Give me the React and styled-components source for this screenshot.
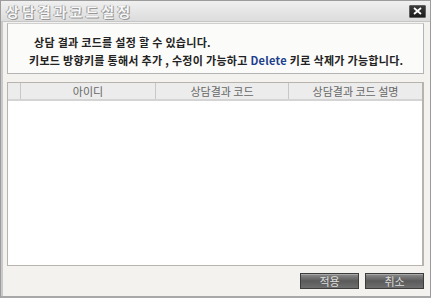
import styled, { createGlobalStyle } from "styled-components";

const GlobalStyle = createGlobalStyle`
  html, body {
    margin: 0;
    padding: 0;
    background: #ffffff;
  }
  #root {
    width: 431px;
    height: 300px;
  }
`;

const columns = ["아이디", "상담결과 코드", "상담결과 코드 설명"];

const App = () => {
  return (
    <>
      <GlobalStyle />
      <Window>
        <TitleBar>
          <Title>상담결과코드설정</Title>
          <CloseButton aria-label="close">
            <svg width="9" height="8" viewBox="0 0 9 8">
              <path d="M1 1 L8 7 M8 1 L1 7" stroke="#ffffff" strokeWidth="1.8" />
            </svg>
          </CloseButton>
        </TitleBar>
        <Body>
          <InfoBox>
            <InfoLine $indent={26}>상담 결과 코드를 설정 할 수 있습니다.</InfoLine>
            <InfoLine $indent={21}>
              키보드 방향키를 통해서 추가 , 수정이 가능하고 <Key>Delete</Key> 키로 삭제가 가능합니다.
            </InfoLine>
          </InfoBox>
          <Grid>
            <HeaderRow>
              <RowHead />
              {columns.map((c) => (
                <HeaderCell key={c}>{c}</HeaderCell>
              ))}
            </HeaderRow>
            <GridBody />
          </Grid>
          <Footer>
            <ActionButton>적용</ActionButton>
            <ActionButton>취소</ActionButton>
          </Footer>
        </Body>
      </Window>
    </>
  );
};

export default App;

const Window = styled.div`
  width: 431px;
  height: 298px;
  box-sizing: border-box;
  display: flex;
  flex-direction: column;
  background: #f3f2ee;
  border: 1px solid #9c9c9c;
  border-bottom: 2px solid #a8a8a8;
  font-family: "Noto Sans CJK KR", "Noto Sans", sans-serif;
`;

const TitleBar = styled.div`
  height: 20px;
  flex: none;
  display: flex;
  align-items: center;
  justify-content: space-between;
  padding: 0 4px 0 5px;
  background: linear-gradient(#f0f0f0, #dcdcdc);
  border-bottom: 1px solid #c6c6c6;
`;

const Title = styled.span`
  font-size: 14px;
  font-weight: 700;
  color: #f7f7f7;
  letter-spacing: 3px;
  line-height: 16px;
  text-shadow: 0 0 1px #8a8a8a, 1px 1px 0 #9a9a9a, -1px 0 0 #a8a8a8;
`;

const CloseButton = styled.div`
  width: 15px;
  height: 11px;
  display: flex;
  align-items: center;
  justify-content: center;
  background: linear-gradient(#3a3a3a, #1c1c1c);
  border: 1px solid #606060;
  border-radius: 1px;
`;

const Body = styled.div`
  flex: 1;
  display: flex;
  flex-direction: column;
  padding: 1px 6px 0 4px;
  border-left: 2px solid #c9c9c9;
`;

const InfoBox = styled.div`
  height: 51px;
  box-sizing: border-box;
  display: flex;
  flex-direction: column;
  gap: 6px;
  padding-top: 12px;
  background: #fbfbf9;
  border: 1px solid #b4b4b4;
  border-top-color: #cfcfcf;
`;

const InfoLine = styled.div`
  padding-left: ${(p) => p.$indent}px;
  font-size: 11px;
  font-weight: 700;
  color: #222222;
  line-height: 12px;
  letter-spacing: 0.3px;
  white-space: nowrap;
`;

const Key = styled.span`
  color: #1d3f8c;
`;

const Grid = styled.div`
  margin-top: 8px;
  height: 182px;
  display: flex;
  flex-direction: column;
  background: #ffffff;
  border: 1px solid #b9b3ad;
  border-right-width: 2px;
`;

const HeaderRow = styled.div`
  height: 16px;
  display: grid;
  grid-template-columns: 13px 135px 133px 1fr;
  background: #ececec;
  border-bottom: 2px solid #d4d4d4;
`;

const RowHead = styled.div`
  border-right: 1px solid #c8c8c8;
`;

const HeaderCell = styled.div`
  display: flex;
  align-items: center;
  justify-content: center;
  font-size: 11px;
  color: #666666;
  border-right: 1px solid #c8c8c8;
  &:last-child {
    border-right: none;
  }
`;

const GridBody = styled.div`
  flex: 1;
`;

const Footer = styled.div`
  flex: 1;
  display: flex;
  justify-content: flex-end;
  align-items: flex-start;
  gap: 6px;
  padding: 7px 0 0 0;
`;

const ActionButton = styled.div`
  width: 57px;
  height: 14px;
  display: flex;
  align-items: center;
  justify-content: center;
  font-size: 11px;
  color: #dcdcdc;
  background: linear-gradient(#8c8c8c, #5a5a5a 50%, #6e6e6e);
  border: 1px solid #3c3c3c;
  box-shadow: inset 0 1px 0 #a8a8a8;
`;
